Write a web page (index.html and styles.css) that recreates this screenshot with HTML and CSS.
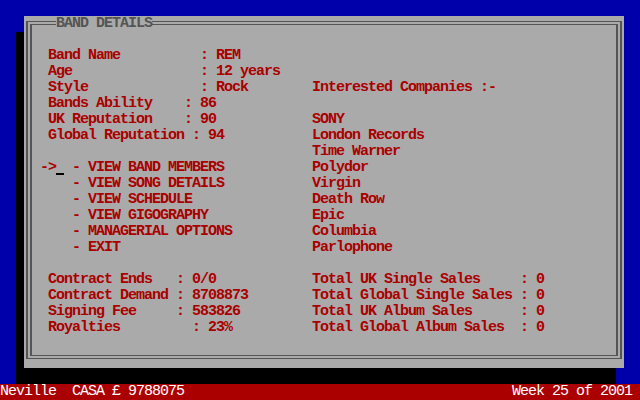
FILE: index.html
```html
<!DOCTYPE html>
<html>
<head>
<meta charset="utf-8">
<link rel="stylesheet" href="styles.css">
</head>
<body>
<div class="screen">
  <div class="desk">
    <div class="panel">
      <div class="title">BAND DETAILS</div>
      <div class="frame-outer">
        <div class="frame-inner">
          <div class="rows">
            <span> Band Name          : REM</span><span></span>
            <span> Age                : 12 years</span><span></span>
            <span> Style              : Rock</span><span>Interested Companies :-</span>
            <span> Bands Ability    : 86</span><span></span>
            <span> UK Reputation    : 90</span><span>SONY</span>
            <span> Global Reputation : 94</span><span>London Records</span>
            <span></span><span>Time Warner</span>
            <span>-&gt;<span class="cursor"></span> - VIEW BAND MEMBERS</span><span>Polydor</span>
            <span>    - VIEW SONG DETAILS</span><span>Virgin</span>
            <span>    - VIEW SCHEDULE</span><span>Death Row</span>
            <span>    - VIEW GIGOGRAPHY</span><span>Epic</span>
            <span>    - MANAGERIAL OPTIONS</span><span>Columbia</span>
            <span>    - EXIT</span><span>Parlophone</span>
            <span></span><span></span>
            <span> Contract Ends   : 0/0</span><span>Total UK Single Sales     : 0</span>
            <span> Contract Demand : 8708873</span><span>Total Global Single Sales : 0</span>
            <span> Signing Fee     : 583826</span><span>Total UK Album Sales      : 0</span>
            <span> Royalties         : 23%</span><span>Total Global Album Sales  : 0</span>
          </div>
        </div>
      </div>
    </div>
  </div>
  <div class="status">
    <span>Neville  CASA £ 9788075</span>
    <span>Week 25 of 2001 </span>
  </div>
</div>
</body>
</html>
```

FILE: styles.css
```css
html, body {
  margin: 0;
  padding: 0;
}
body {
  width: 640px;
  height: 400px;
  overflow: hidden;
  background: #0000aa;
  font-family: "Liberation Mono", "DejaVu Sans Mono", monospace;
  font-size: 15px;
  letter-spacing: -1px;
  line-height: 16px;
}
.screen {
  display: flex;
  flex-direction: column;
  height: 400px;
}
.desk {
  height: 384px;
  box-sizing: border-box;
  padding: 16px 0 0 24px;
}
.panel {
  position: relative;
  width: 600px;
  height: 352px;
  box-sizing: border-box;
  background: #aaaaaa;
  box-shadow: -8px 16px 0 0 #000;
  padding: 5px 2px 9px 2px;
  display: flex;
}
.title {
  position: absolute;
  left: 32px;
  top: 0;
  height: 16px;
  background: #aaaaaa;
  color: #555555;
  font-weight: bold;
  white-space: pre;
}
.frame-outer {
  flex: 1;
  display: flex;
  border: 1px solid #555555;
  border-left-width: 2px;
  border-right-width: 2px;
  padding: 2px;
}
.frame-inner {
  flex: 1;
  border: 1px solid #555555;
  border-left-width: 2px;
  border-right-width: 2px;
  padding: 23px 0 0 8px;
}
.rows {
  display: grid;
  grid-template-columns: 272px 1fr;
  grid-auto-rows: 16px;
  color: #aa0000;
  font-weight: bold;
  white-space: pre;
}
.cursor {
  display: inline-block;
  width: 8px;
  height: 16px;
  vertical-align: top;
  background: linear-gradient(#000, #000) 0 13px / 8px 2px no-repeat;
}
.status {
  height: 16px;
  background: #aa0000;
  color: #ffffff;
  display: flex;
  justify-content: space-between;
  white-space: pre;
}
```
